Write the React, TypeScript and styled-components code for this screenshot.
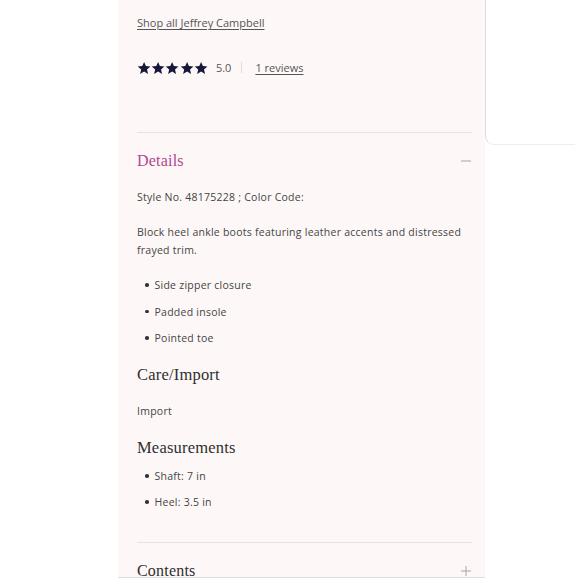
import React from "react";
import styled, { createGlobalStyle } from "styled-components";

const Global = createGlobalStyle`
  html, body { margin: 0; padding: 0; background: #ffffff; }
  body { font-family: "Open Sans", "Liberation Sans", sans-serif; }
`;

const Page = styled.div`
  display: flex;
  align-items: flex-start;
  padding-left: 118px;
  height: 580px;
  overflow: hidden;
`;

const Panel = styled.div`
  width: 367px;
  height: 578px;
  box-sizing: border-box;
  background: #fdf8f7;
  border-bottom: 1px solid #e2dedd;
  padding: 0 13px 0 19px;
  overflow: hidden;
  display: flex;
  flex-direction: column;
`;

const Aside = styled.div`
  width: 90px;
  height: 145px;
  box-sizing: border-box;
  border-left: 1.5px solid #dcdcdc;
  border-bottom: 1px solid #eeeeee;
  border-bottom-left-radius: 9px;
  background: #fff;
`;

const ShopLink = styled.a`
  margin-top: 15px;
  font-size: 11px;
  font-weight: 500;
  color: #555;
  text-decoration: underline;
  text-underline-offset: 2px;
  line-height: 16px;
`;

const RatingRow = styled.div`
  display: flex;
  align-items: center;
  margin-top: 29px;
  height: 16px;
`;

const Stars = styled.div`
  display: flex;
  color: #17173a;
`;

const Score = styled.span`
  margin-left: 8px;
  font-size: 11px;
  color: #555;
`;

const Sep = styled.span`
  width: 1px;
  height: 11px;
  background: #e0dcdc;
  margin: 0 13px 0 10px;
`;

const Reviews = styled.a`
  font-size: 11px;
  font-weight: 500;
  color: #555;
  text-decoration: underline;
  text-underline-offset: 2px;
`;

const Divider = styled.hr<{ $mt: number }>`
  border: none;
  border-top: 1px solid #e6e2e1;
  margin: ${(p) => p.$mt}px 0 0 0;
  width: 100%;
`;

const AccHeader = styled.div<{ $mt: number }>`
  display: flex;
  align-items: center;
  justify-content: space-between;
  margin-top: ${(p) => p.$mt}px;
  height: 20px;
`;

const AccTitle = styled.h3<{ $accent?: boolean }>`
  margin: 0;
  font-family: "Liberation Serif", "DejaVu Serif", serif;
  font-weight: 400;
  font-size: 16px;
  letter-spacing: 0.2px;
  color: ${(p) => (p.$accent ? "#b0468f" : "#2f2f2f")};
`;

const SubTitle = styled.h4<{ $mt: number }>`
  margin: ${(p) => p.$mt}px 0 0 0;
  font-family: "Liberation Serif", "DejaVu Serif", serif;
  font-weight: 400;
  font-size: 16.5px;
  line-height: 20px;
  letter-spacing: 0.2px;
  color: #2f2f2f;
`;

const Para = styled.p<{ $mt: number }>`
  margin: ${(p) => p.$mt}px 0 0 0;
  font-size: 10.5px;
  font-weight: 500;
  line-height: 18px;
  color: #444;
  letter-spacing: 0.25px;
`;

const List = styled.ul<{ $mt: number; $gap: number }>`
  list-style: none;
  margin: ${(p) => p.$mt}px 0 0 0;
  padding: 0 0 0 8px;
  display: flex;
  flex-direction: column;
  gap: ${(p) => p.$gap}px;
`;

const Item = styled.li`
  display: flex;
  align-items: center;
  font-size: 10.5px;
  font-weight: 500;
  line-height: 18px;
  color: #444;
  letter-spacing: 0.25px;
  &::before {
    content: "";
    width: 3.5px;
    height: 3.5px;
    border-radius: 50%;
    background: #333;
    margin-right: 6px;
  }
`;

const Toggle = styled.svg`
  width: 12px;
  height: 12px;
  stroke: #a9a5a4;
  stroke-width: 1;
`;

const Star = () => (
  <svg width="14.2" height="14" viewBox="0 0 24 24">
    <path
      fill="currentColor"
      d="M12 1.5l3.1 7.2 7.8.7-5.9 5.1 1.8 7.7L12 18.1l-6.8 4.1 1.8-7.7-5.9-5.1 7.8-.7z"
    />
  </svg>
);

export default function App() {
  return (
    <>
      <Global />
      <Page>
        <Panel>
          <ShopLink>Shop all Jeffrey Campbell</ShopLink>
          <RatingRow>
            <Stars>
              {[0, 1, 2, 3, 4].map((i) => (
                <Star key={i} />
              ))}
            </Stars>
            <Score>5.0</Score>
            <Sep />
            <Reviews>1 reviews</Reviews>
          </RatingRow>
          <Divider $mt={57} />
          <AccHeader $mt={19}>
            <AccTitle $accent>Details</AccTitle>
            <Toggle viewBox="0 0 12 12">
              <line x1="1" y1="6" x2="11" y2="6" />
            </Toggle>
          </AccHeader>
          <Para $mt={18}>Style No. 48175228 ; Color Code:</Para>
          <Para $mt={17}>
            Block heel ankle boots featuring leather accents and distressed
            frayed trim.
          </Para>
          <List $mt={17} $gap={8.5}>
            <Item>Side zipper closure</Item>
            <Item>Padded insole</Item>
            <Item>Pointed toe</Item>
          </List>
          <SubTitle $mt={18}>Care/Import</SubTitle>
          <Para $mt={17}>Import</Para>
          <SubTitle $mt={18}>Measurements</SubTitle>
          <List $mt={9} $gap={8}>
            <Item>Shaft: 7 in</Item>
            <Item>Heel: 3.5 in</Item>
          </List>
          <Divider $mt={31} />
          <AccHeader $mt={19}>
            <AccTitle>Contents</AccTitle>
            <Toggle viewBox="0 0 12 12">
              <line x1="1" y1="6" x2="11" y2="6" />
              <line x1="6" y1="1" x2="6" y2="11" />
            </Toggle>
          </AccHeader>
        </Panel>
        <Aside />
      </Page>
    </>
  );
}
